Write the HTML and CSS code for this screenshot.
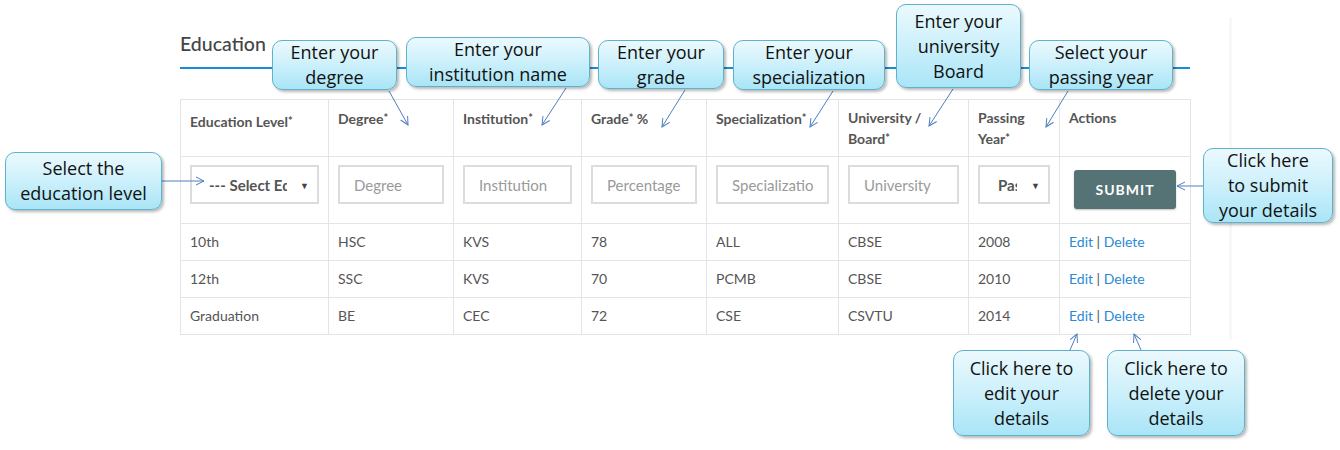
FILE: index.html
```html
<!DOCTYPE html>
<html>
<head>
<meta charset="utf-8">
<link rel="stylesheet" href="styles.css">
</head>
<body>
<div class="page">
  <div class="panel">
    <h2 class="title">Education</h2>
    <table class="edu">
      <colgroup>
        <col style="width:148px"><col style="width:125px"><col style="width:128px"><col style="width:125px">
        <col style="width:132px"><col style="width:130px"><col style="width:91px"><col style="width:131px">
      </colgroup>
      <thead>
        <tr>
          <th class="first">Education Level<span class="req">*</span></th>
          <th>Degree<span class="req">*</span></th>
          <th>Institution<span class="req">*</span></th>
          <th>Grade<span class="req">*</span> %</th>
          <th>Specialization<span class="req">*</span></th>
          <th>University /<br>Board<span class="req">*</span></th>
          <th>Passing<br>Year<span class="req">*</span></th>
          <th>Actions</th>
        </tr>
      </thead>
      <tbody>
        <tr class="inputs">
          <td><span class="sel"><select class="field select"><option>--- Select Education Level ---</option></select></span></td>
          <td><input class="field" placeholder="Degree"></td>
          <td><input class="field" placeholder="Institution"></td>
          <td><input class="field" placeholder="Percentage"></td>
          <td><input class="field" placeholder="Specialization"></td>
          <td><input class="field" placeholder="University"></td>
          <td><span class="sel"><select class="field select small"><option>Passing Year</option></select></span></td>
          <td class="act"><button class="submit">SUBMIT</button></td>
        </tr>
        <tr><td>10th</td><td>HSC</td><td>KVS</td><td>78</td><td>ALL</td><td>CBSE</td><td>2008</td><td><a class="lnk">Edit</a> | <a class="lnk">Delete</a></td></tr>
        <tr><td>12th</td><td>SSC</td><td>KVS</td><td>70</td><td>PCMB</td><td>CBSE</td><td>2010</td><td><a class="lnk">Edit</a> | <a class="lnk">Delete</a></td></tr>
        <tr><td>Graduation</td><td>BE</td><td>CEC</td><td>72</td><td>CSE</td><td>CSVTU</td><td>2014</td><td><a class="lnk">Edit</a> | <a class="lnk">Delete</a></td></tr>
      </tbody>
    </table>
  </div>
</div>

<svg class="arrows" width="1340" height="450" viewBox="0 0 1340 450">
  <defs>
    <marker id="ah" markerWidth="10" markerHeight="10" refX="9" refY="5" orient="auto" markerUnits="userSpaceOnUse">
      <path d="M1,1 L9,5 L1,9" fill="none" stroke="#4f7fbf" stroke-width="1"/>
    </marker>
  </defs>
  <g stroke="#4f7fbf" stroke-width="1" fill="none" marker-end="url(#ah)">
    <line x1="389" y1="91" x2="408" y2="125"/>
    <line x1="566" y1="88" x2="542" y2="125"/>
    <line x1="685" y1="90" x2="662" y2="127"/>
    <line x1="833" y1="91" x2="810" y2="127"/>
    <line x1="953" y1="89" x2="929" y2="126"/>
    <line x1="1068" y1="91" x2="1046" y2="127"/>
    <line x1="162" y1="181" x2="204" y2="181"/>
    <line x1="1203" y1="186" x2="1177" y2="186"/>
    <line x1="1070" y1="350" x2="1077" y2="334"/>
    <line x1="1141" y1="350" x2="1134" y2="334"/>
  </g>
</svg>

<div class="note n-degree">Enter your<br>degree</div>
<div class="note n-inst">Enter your<br>institution name</div>
<div class="note n-grade">Enter your<br>grade</div>
<div class="note n-spec">Enter your<br>specialization</div>
<div class="note n-univ">Enter your<br>university<br>Board</div>
<div class="note n-pass">Select your<br>passing year</div>
<div class="note n-level">Select the<br>education level</div>
<div class="note n-submit">Click here<br>to submit<br>your details</div>
<div class="note n-edit">Click here to<br>edit your<br>details</div>
<div class="note n-delete">Click here to<br>delete your<br>details</div>
</body>
</html>
```

FILE: styles.css
```css
html, body {
  margin: 0;
  padding: 0;
  background: #ffffff;
}
body {
  width: 1340px;
  height: 450px;
  position: relative;
  overflow: hidden;
  font-family: Lato, "Open Sans", sans-serif;
  color: #555;
}
.page {
  display: flex;
  padding-top: 17px;
}
.panel {
  width: 1232px;
  height: 323px;
  padding-left: 180px;
  box-sizing: border-box;
  border-right: 3px solid #f8f8f8;
}
.title {
  margin: 15px 0 0 0;
  width: 1010px;
  font-size: 19.5px;
  line-height: 23px;
  font-weight: 500;
  color: #454545;
  padding-bottom: 12px;
  border-bottom: 2px solid #1a8bd6;
}
.edu {
  margin-top: 30px;
  width: 1010px;
  border-collapse: collapse;
  table-layout: fixed;
  font-size: 14px;
}
.edu th, .edu td {
  border: 1px solid #e4e4e4;
  text-align: left;
}
.edu th {
  height: 57px;
  box-sizing: border-box;
  vertical-align: top;
  padding: 8px 9px 0 9px;
  font-weight: 700;
  line-height: 20px;
  color: #555;
}
.edu th.first {
  padding-top: 11px;
}
.req {
  font-size: 11px;
  vertical-align: 2px;
}
.edu td {
  height: 37px;
  box-sizing: border-box;
  padding: 0 9px;
  vertical-align: middle;
  line-height: 16px;
}
.edu tr.inputs td {
  height: 67px;
  vertical-align: top;
  padding-top: 8px;
}
.edu tr.inputs td.act {
  padding: 13px 0 0 14px;
}
.field {
  display: block;
  width: 100%;
  height: 39px;
  box-sizing: border-box;
  border: 2px solid #dcdcdc;
  background: #fff;
  font-family: Lato, sans-serif;
  font-size: 15px;
  padding: 0 14px;
  color: #555;
  outline: none;
  margin: 0;
}
.field::placeholder {
  color: #9a9a9a;
}
.sel {
  display: block;
  position: relative;
}
.sel::after {
  content: "\25BC";
  position: absolute;
  right: 10px;
  top: 13px;
  font-size: 9px;
  color: #444;
  pointer-events: none;
}
.select {
  -webkit-appearance: none;
  appearance: none;
  font-weight: 700;
  padding: 0 30px 0 17px;
  color: #555;
}
.select.small {
  padding: 0 31px 0 18px;
}
.submit {
  width: 102px;
  height: 39px;
  border: none;
  border-radius: 3px;
  background: #557275;
  color: #fff;
  font-family: Lato, sans-serif;
  font-weight: 700;
  font-size: 14px;
  letter-spacing: 1px;
  box-shadow: 0 1px 2px rgba(0,0,0,0.25);
  padding: 0;
}
.lnk {
  color: #2a8ad6;
}

.arrows {
  position: absolute;
  left: 0;
  top: 0;
  pointer-events: none;
  z-index: 2;
}
.note {
  position: absolute;
  z-index: 3;
  box-sizing: border-box;
  display: flex;
  flex-direction: column;
  justify-content: center;
  align-items: center;
  text-align: center;
  font-family: "Open Sans", sans-serif;
  font-size: 18px;
  line-height: 25px;
  color: #111;
  border: 1px solid #5fb2cb;
  border-radius: 10px;
  background: linear-gradient(to bottom, #ebf9fe 0%, #ccf0fb 50%, #a9e5f7 100%);
  box-shadow: 2px 2px 3px rgba(0,0,0,0.28);
  white-space: nowrap;
}
.n-degree { left: 272px; top: 40px; width: 125px; height: 50px; }
.n-inst { left: 406px; top: 37px; width: 184px; height: 50px; }
.n-grade { left: 598px; top: 40px; width: 126px; height: 49px; }
.n-spec { left: 733px; top: 40px; width: 152px; height: 50px; }
.n-univ { left: 896px; top: 4px; width: 125px; height: 84px; }
.n-pass { left: 1029px; top: 40px; width: 144px; height: 50px; }
.n-level { left: 5px; top: 152px; width: 157px; height: 58px; }
.n-submit { left: 1203px; top: 148px; width: 130px; height: 75px; }
.n-edit { left: 953px; top: 350px; width: 137px; height: 86px; }
.n-delete { left: 1107px; top: 350px; width: 138px; height: 86px; }
```
